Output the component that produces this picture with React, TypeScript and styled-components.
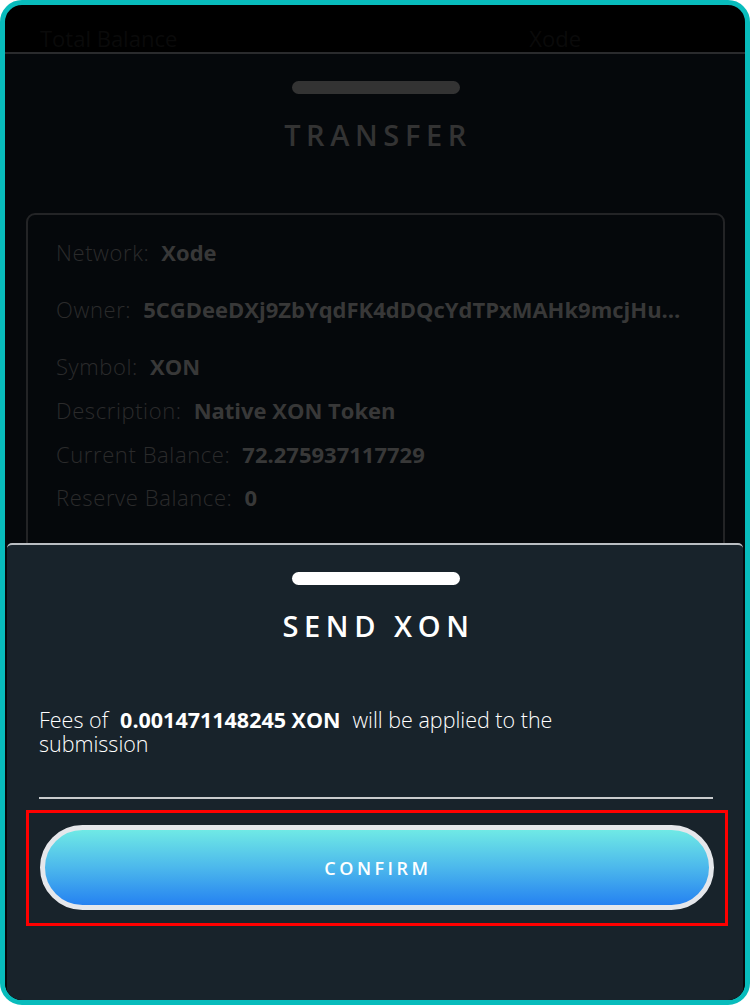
import React from "react";
import styled, { createGlobalStyle } from "styled-components";

const Global = createGlobalStyle`
  html, body { margin: 0; padding: 0; background: #ffffff; }
  body { font-family: "Open Sans", "Noto Sans", sans-serif; }
  * { box-sizing: border-box; }
`;

const Frame = styled.div`
  position: relative;
  width: 750px;
  height: 1005px;
  border: 5px solid #08bcbc;
  border-radius: 22px;
  background: #000000;
  overflow: hidden;
  display: flex;
  flex-direction: column;
`;

const BackdropBar = styled.div`
  height: 47px;
  flex: none;
  display: flex;
  align-items: flex-end;
  padding: 0 164px 2px 35px;
  overflow: hidden;
`;

const BackdropText = styled.span<{ $end?: boolean }>`
  font-size: 22px;
  color: #0a0a0a;
  line-height: 24px;
  margin-left: ${(p) => (p.$end ? "auto" : "0")};
  white-space: nowrap;
`;

const Sheet = styled.div`
  flex: 1;
  background: #05080b;
  border-top: 2px solid #2a2b2d;
  display: flex;
  flex-direction: column;
  align-items: center;
  padding: 27px 20px 0 21px;
`;

const Handle = styled.div<{ $light?: boolean }>`
  width: 168px;
  height: 13px;
  border-radius: 7px;
  background: ${(p) => (p.$light ? "#ffffff" : "#333333")};
  flex: none;
`;

const Title = styled.h2<{ $light?: boolean }>`
  margin: 26px 0 0;
  font-family: "Open Sans", sans-serif;
  font-weight: 600;
  font-size: 29px;
  line-height: 1;
  letter-spacing: 5.6px;
  padding-left: 5px;
  color: ${(p) => (p.$light ? "#ffffff" : "#333333")};
`;

const Card = styled.div`
  align-self: stretch;
  margin-top: 64px;
  border: 2px solid #232426;
  border-radius: 9px;
  padding: 22px 40px 40px 28px;
  display: flex;
  flex-direction: column;
  height: 400px;
`;

const Row = styled.div<{ $gap: number }>`
  display: flex;
  align-items: baseline;
  font-size: 22px;
  line-height: 30px;
  margin-bottom: ${(p) => p.$gap}px;
  white-space: nowrap;
  min-width: 0;
`;

const Label = styled.span`
  color: #2b2b2b;
  font-weight: 300;
  letter-spacing: 0.6px;
  margin-right: 12px;
  flex: none;
`;

const Value = styled.span<{ $truncate?: boolean }>`
  color: #383838;
  font-weight: 700;
  min-width: 0;
  overflow: ${(p) => (p.$truncate ? "hidden" : "visible")};
  text-overflow: ellipsis;
`;

const Overlay = styled.div`
  position: absolute;
  left: 2px;
  right: 2px;
  top: 538px;
  bottom: 0;
  background: #18232b;
  border-top: 2px solid #b9bec2;
  border-radius: 5px 5px 0 0;
  display: flex;
  flex-direction: column;
  align-items: center;
  padding: 27px 30px 0 32px;
`;

const FeeText = styled.p`
  align-self: stretch;
  margin: 68px 0 0;
  font-size: 21.5px;
  line-height: 24px;
  font-weight: 300;
  color: #ffffff;
  padding-right: 80px;
`;

const Strong = styled.strong`
  font-weight: 700;
  margin: 0 12px;
`;

const Divider = styled.div`
  align-self: stretch;
  height: 2px;
  background: #c9cbcd;
  margin-top: 41px;
`;

const Highlight = styled.div`
  align-self: stretch;
  margin: 11px -15px 0 -13px;
  border: 3px solid #ff0000;
  padding: 12px 11px 13px 11px;
`;

const ConfirmButton = styled.button`
  width: 100%;
  height: 85px;
  border-radius: 43px;
  border: 5px solid #e5e7eb;
  background: linear-gradient(180deg, #6fe9e5 0%, #4cb8ec 50%, #2582f1 100%);
  color: #ffffff;
  font-family: "Open Sans", sans-serif;
  font-weight: 600;
  font-size: 18px;
  letter-spacing: 3.5px;
  padding-left: 8px;
  cursor: pointer;
`;

const rows = [
  { label: "Network:", value: "Xode", gap: 27 },
  { label: "Owner:", value: "5CGDeeDXj9ZbYqdFK4dDQcYdTPxMAHk9mcjHu3Js7Tr", gap: 27 },
  { label: "Symbol:", value: "XON", gap: 14 },
  { label: "Description:", value: "Native XON Token", gap: 14 },
  { label: "Current Balance:", value: "72.275937117729", gap: 13 },
  { label: "Reserve Balance:", value: "0", gap: 0 },
];

export default function App() {
  return (
    <>
      <Global />
      <Frame>
        <BackdropBar>
          <BackdropText>Total Balance</BackdropText>
          <BackdropText $end>Xode</BackdropText>
        </BackdropBar>
        <Sheet>
          <Handle />
          <Title>TRANSFER</Title>
          <Card>
            {rows.map((r) => (
              <Row key={r.label} $gap={r.gap}>
                <Label>{r.label}</Label>
                <Value $truncate={r.label === "Owner:"}>{r.value}</Value>
              </Row>
            ))}
          </Card>
        </Sheet>
        <Overlay>
          <Handle $light />
          <Title $light>SEND XON</Title>
          <FeeText>
            Fees of<Strong>0.001471148245 XON</Strong>will be applied to the submission
          </FeeText>
          <Divider />
          <Highlight>
            <ConfirmButton>CONFIRM</ConfirmButton>
          </Highlight>
        </Overlay>
      </Frame>
    </>
  );
}
